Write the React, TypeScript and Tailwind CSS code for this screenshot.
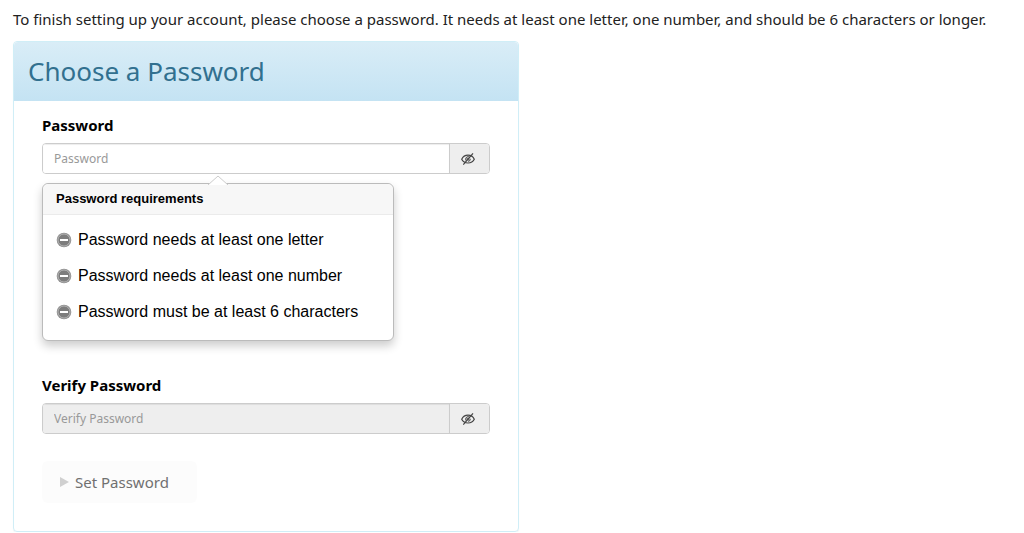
import { useId, useState } from 'react'

interface PasswordFieldProps {
  label: string
  value: string
  onChange: (value: string) => void
  disabled?: boolean
}

const REQUIREMENTS = [
  'Password needs at least one letter',
  'Password needs at least one number',
  'Password must be at least 6 characters',
]

function EyeOffIcon() {
  return (
    <svg viewBox="0 0 14 12" className="h-3 w-3.5" fill="none" stroke="#444" strokeWidth="1.200" aria-hidden="true">
      <path d="M.7 6.2C2 3.500 4.300 2.200 7 2.200s5 1.300 6.300 4C12 8.800 9.700 10 7 10S2 8.800.7 6.200Z" />
      <path d="M8.800 4.300A2.400 2.400 0 0 0 4.700 6c0 .9.300 1.500.8 2M9.300 5.800A2.300 2.300 0 0 1 7 8.300" strokeWidth="1" />
      <circle cx="7" cy="6" r="1.600" fill="#777" stroke="none" />
      <path d="M12 .4 2.300 11.600" />
    </svg>
  )
}

function MinusIcon() {
  return (
    <svg viewBox="0 0 16 16" className="size-4 shrink-0" aria-hidden="true">
      <circle cx="8" cy="8" r="7.300" fill="#8f8f8f" />
      <circle cx="8" cy="8" r="6" fill="#7d7d7d" stroke="#bcbcbc" strokeWidth=".8" />
      <rect x="4" y="7" width="8" height="2" fill="#fff" />
    </svg>
  )
}

function PasswordField({ label, value, onChange, disabled = false }: PasswordFieldProps) {
  const id = useId()
  const [visible, setVisible] = useState(false)

  return (
    <div>
      <label htmlFor={id} className="block text-[15px] leading-6 font-bold">
        {label}
      </label>
      <div className="mt-1.5 flex h-[31px] overflow-hidden rounded border border-[#ccc]">
        <input
          id={id}
          type={visible ? 'text' : 'password'}
          placeholder={label}
          value={value}
          disabled={disabled}
          onChange={(e) => onChange(e.target.value)}
          className="min-w-0 flex-1 bg-white px-[11px] text-xs shadow-[inset_0_1px_1px_rgba(0,0,0,0.075)] outline-none placeholder:text-[#999] disabled:bg-[#eee]"
        />
        <button
          type="button"
          aria-label={`Show ${label}`}
          onClick={() => setVisible((v) => !v)}
          className="flex w-10 items-center border-l border-[#ccc] bg-[#eee] pl-[11px]"
        >
          <EyeOffIcon />
        </button>
      </div>
    </div>
  )
}

function RequirementsPopover() {
  return (
    <div className="relative mt-[9px] max-w-[352px] rounded-md border border-[#bbb] bg-white font-['Liberation_Sans',Arial,sans-serif] shadow-[0_5px_10px_rgba(0,0,0,0.2)]">
      <svg viewBox="0 0 20 10" className="absolute -top-[9px] left-1/2 h-2.5 w-5 -translate-x-1/2" aria-hidden="true">
        <path d="M0 10 10 1l10 9" fill="#fff" stroke="#ccc" />
      </svg>
      <h3 className="rounded-t-md border-b border-[#ebebeb] bg-[#f7f7f7] px-[13px] py-1.5 text-[13px] leading-[18px] font-bold">
        Password requirements
      </h3>
      <ul className="flex flex-col gap-3 px-[13px] pt-[13px] pb-4 text-base leading-6">
        {REQUIREMENTS.map((text) => (
          <li key={text} className="flex items-center gap-1.5">
            <MinusIcon />
            {text}
          </li>
        ))}
      </ul>
    </div>
  )
}

export default function App() {
  const [password, setPassword] = useState('')
  const [verify, setVerify] = useState('')

  return (
    <main className="bg-white px-[13px] pt-[7px] font-['Noto_Sans','Open_Sans',sans-serif] text-black">
      <p className="text-[15px] leading-6 text-[#222]">
        To finish setting up your account, please choose a password. It needs at least one letter, one number, and
        should be 6 characters or longer.
      </p>
      <form
        onSubmit={(e) => e.preventDefault()}
        className="mt-2.5 max-w-[506px] rounded border border-[#d0eef7] shadow-[0_1px_1px_rgba(0,0,0,0.05)]"
      >
        <h1 className="rounded-t bg-linear-to-b from-[#d9edf7] to-[#c4e3f3] px-3.5 pt-[11px] pb-3 text-[26px] leading-9 text-[#31708f]">
          Choose a Password
        </h1>
        <div className="px-7 pt-3 pb-7">
          <PasswordField label="Password" value={password} onChange={setPassword} />
          <RequirementsPopover />
          <div className="mt-8">
            <PasswordField label="Verify Password" value={verify} onChange={setVerify} disabled={!password} />
          </div>
          <button
            type="submit"
            disabled={!password || password !== verify}
            className="mt-[27px] flex items-center gap-1.5 rounded-md bg-[#fcfcfc] py-2 pr-7 pl-[18px] text-[15px] leading-[26px] text-[#707070]"
          >
            <svg viewBox="0 0 9 10" className="h-2.5 w-[9px]" aria-hidden="true">
              <path d="M0 0 9 5 0 10Z" fill="#d0d0d0" />
            </svg>
            Set Password
          </button>
        </div>
      </form>
    </main>
  )
}
